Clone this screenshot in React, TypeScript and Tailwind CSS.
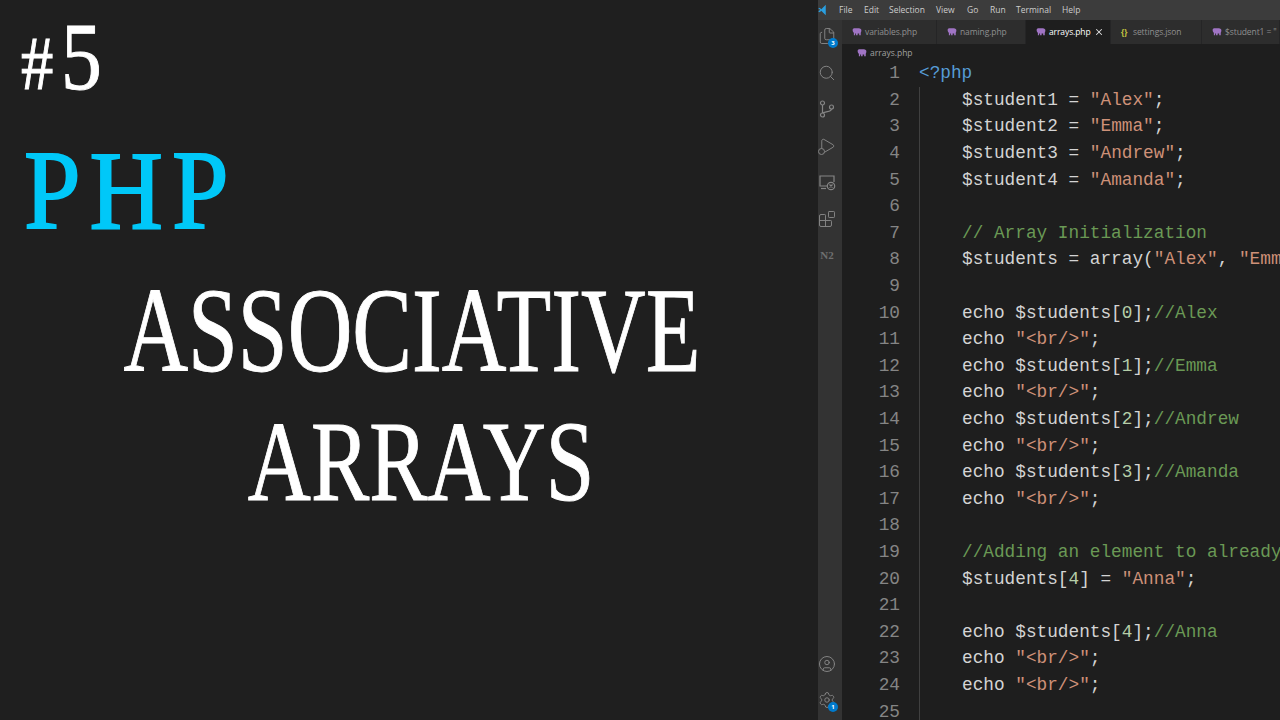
import { Blocks, CircleUser, Files, Play, Search, Settings, X } from "lucide-react";

type Seg = [string, string];

const W = "text-[#d4d4d4]";
const S = "text-[#ce9178]";
const C = "text-[#6a9955]";
const N = "text-[#b5cea8]";

const echoBr: Seg[] = [["echo ", W], ['"<br/>"', S], [";", W]];
const echoIdx = (i: string, name: string): Seg[] => [
  ["echo $students[", W],
  [i, N],
  ["];", W],
  ["//" + name, C],
];

const lines: Seg[][] = [
  [],
  [["$student1 = ", W], ['"Alex"', S], [";", W]],
  [["$student2 = ", W], ['"Emma"', S], [";", W]],
  [["$student3 = ", W], ['"Andrew"', S], [";", W]],
  [["$student4 = ", W], ['"Amanda"', S], [";", W]],
  [],
  [["// Array Initialization", C]],
  [["$students = array(", W], ['"Alex"', S], [", ", W], ['"Emma"', S], [", ", W], ['"Andrew"', S]],
  [],
  echoIdx("0", "Alex"),
  echoBr,
  echoIdx("1", "Emma"),
  echoBr,
  echoIdx("2", "Andrew"),
  echoBr,
  echoIdx("3", "Amanda"),
  echoBr,
  [],
  [["//Adding an element to already existing array", C]],
  [["$students[", W], ["4", N], ["] = ", W], ['"Anna"', S], [";", W]],
  [],
  echoIdx("4", "Anna"),
  echoBr,
  echoBr,
  [],
];

const menu = [
  ["File", "w-[25px]"],
  ["Edit", "w-[25px]"],
  ["Selection", "w-[47px]"],
  ["View", "w-[31px]"],
  ["Go", "w-[23px]"],
  ["Run", "w-[26px]"],
  ["Terminal", "w-[46px]"],
  ["Help", "w-[30px]"],
];

function PhpIcon() {
  return (
    <svg viewBox="0 0 16 12" className="w-[10px] h-[8px] shrink-0" fill="#a074c4">
      <path d="M1 2.500C1 1 2.500 0 4 0h7c2.500 0 4 1.500 4 3.500 0 1.500-.5 2.500-1 3.500V11h-2.500V8.500H9V11H6.500V8.500H5V11H3V7C1.500 6.500 1 4.500 1 2.500z" />
    </svg>
  );
}

function Tab({ label, width, active, json }: { label: string; width: string; active?: boolean; json?: boolean }) {
  return (
    <div
      className={`${width} h-full flex items-center pl-[10px] gap-[3px] shrink-0 border-r border-[#252526] overflow-hidden ${
        active ? "bg-[#1e1e1e] text-[#ffffff]" : "bg-[#2d2d2d] text-[#8f8f8f]"
      }`}
    >
      {json ? <span className="text-[#cbcb41] font-bold text-[8px] w-[9px]">{"{}"}</span> : <PhpIcon />}
      <span className="whitespace-nowrap tracking-[-0.1px]">{label}</span>
      {active && <X className="w-[10px] h-[10px] text-[#e0e0e0]" strokeWidth={2.500} />}
    </div>
  );
}

function Badge({ text }: { text: string }) {
  return (
    <span className="absolute -right-[2px] -bottom-[3px] w-[10px] h-[10px] rounded-full bg-[#007acc] text-white text-[6px] font-bold leading-[10px] text-center">
      {text}
    </span>
  );
}

const iconClass = "w-[18px] h-[18px] text-[#858585]";

function ActivityBar() {
  return (
    <div className="w-[24px] shrink-0 bg-[#333333] flex flex-col items-start justify-between pt-[7px] pb-[11px]">
      <div className="flex flex-col items-start gap-[18.500px]">
        <div className="relative">
          <Files className={iconClass} strokeWidth={1.300} />
          <Badge text="3" />
        </div>
        <Search className={iconClass} strokeWidth={1.300} />
        <svg viewBox="0 0 18 18" className={iconClass} fill="none" stroke="currentColor" strokeWidth="1.200">
          <circle cx="4.500" cy="3" r="2" />
          <circle cx="4.500" cy="15" r="2" />
          <circle cx="13.500" cy="7" r="2" />
          <path d="M4.500 5v8M13.500 9c0 3-5 2-9 4" />
        </svg>
        <div className="relative">
          <Play className={iconClass} strokeWidth={1.300} />
          <span className="absolute left-0 bottom-0 w-[7px] h-[7px] rounded-full border border-[#858585] bg-[#333333]" />
        </div>
        <svg viewBox="0 0 18 18" className={iconClass} fill="none" stroke="currentColor" strokeWidth="1.200">
          <path d="M9 13H2V3h14v6" />
          <path d="M3 15.500h5" />
          <circle cx="13" cy="13" r="3.700" />
          <path d="M11.500 11.500l3 3M14.500 11.500l-3 3" />
        </svg>
        <Blocks className={iconClass} strokeWidth={1.300} />
        <span className="w-[18px] h-[18px] text-[#6f6f6f] text-[11px] leading-[18px] text-center font-['Liberation_Serif',serif] font-bold">
          N2
        </span>
      </div>
      <div className="flex flex-col items-start gap-[18px]">
        <CircleUser className={iconClass} strokeWidth={1.300} />
        <div className="relative">
          <Settings className={iconClass} strokeWidth={1.300} />
          <Badge text="1" />
        </div>
      </div>
    </div>
  );
}

function Editor() {
  return (
    <div className="flex-1 min-w-0 flex flex-col bg-[#1e1e1e] font-['Open_Sans',sans-serif]">
      <div className="h-[24px] shrink-0 flex bg-[#252526] text-[8.500px]">
        <Tab label="variables.php" width="w-[95px]" />
        <Tab label="naming.php" width="w-[89px]" />
        <Tab label="arrays.php" width="w-[85px]" active />
        <Tab label="settings.json" width="w-[91px]" json />
        <Tab label={'$student1 = "'} width="w-[78px]" />
      </div>
      <div className="h-[16.300px] shrink-0 flex items-center gap-[3px] pt-[2px] pl-[15px] text-[8.500px] text-[#a0a0a0]">
        <PhpIcon />
        <span>arrays.php</span>
      </div>
      <div className="font-['Liberation_Mono',monospace] text-[17.750px] leading-[26.600px]">
        {lines.map((segs, i) => (
          <div key={i} className="flex h-[26.600px] whitespace-pre">
            <div className="w-[58px] shrink-0 text-right text-[#858585]">{i + 1}</div>
            {i === 0 ? (
              <div className="ml-[19px] text-[#569cd6]">{"<?php"}</div>
            ) : (
              <div className="ml-[19px] pl-[42px] border-l border-[#404040]">
                {segs.map(([text, color], j) => (
                  <span key={j} className={color}>
                    {text}
                  </span>
                ))}
              </div>
            )}
          </div>
        ))}
      </div>
    </div>
  );
}

export default function App() {
  return (
    <div className="w-[1280px] h-[720px] flex overflow-hidden bg-[#1f1f1f]">
      {/* thumbnail title */}
      <div className="w-[818px] shrink-0 font-['Liberation_Serif',serif] text-white whitespace-nowrap [-webkit-text-stroke:1px_currentColor]">
        <div className="pl-[21px] pt-[9px] h-[131px]">
          <span className="inline-block text-[96px] leading-[96px] origin-left scale-x-[0.85]">
            <span className="text-[76px] mr-[9px]">#</span>5
          </span>
        </div>
        <div className="pl-[24px] h-[121px]">
          <span className="inline-block text-[#00c8f8] text-[113px] leading-[118px] tracking-[10px] origin-left scale-x-[0.9] [-webkit-text-stroke:2px_currentColor]">
            PHP
          </span>
        </div>
        <div className="flex flex-col items-center pl-[6px] pt-[12px]">
          <span className="text-[121px] leading-[132px] scale-x-[0.74]">ASSOCIATIVE</span>
          <span className="text-[115px] leading-[132px] pl-[24px] scale-x-[0.76]">ARRAYS</span>
        </div>
      </div>

      {/* VS Code window */}
      <div className="flex-1 min-w-0 flex flex-col">
        <div className="h-[20px] shrink-0 bg-[#3c3c3c] flex items-center text-[8.500px] text-[#cccccc] font-['Open_Sans',sans-serif]">
          <svg viewBox="0 0 10 16" className="w-[8px] h-[12px] ml-0 mr-[13px]" fill="#2a9fe0">
            <path d="M0 6l2-1 2 2 6-6v14l-6-6-2 2-2-1 2.500-2.500z" />
          </svg>
          {menu.map(([label, width]) => (
            <span key={label} className={width}>
              {label}
            </span>
          ))}
        </div>
        <div className="flex-1 min-h-0 flex">
          <ActivityBar />
          <Editor />
        </div>
      </div>
    </div>
  );
}
